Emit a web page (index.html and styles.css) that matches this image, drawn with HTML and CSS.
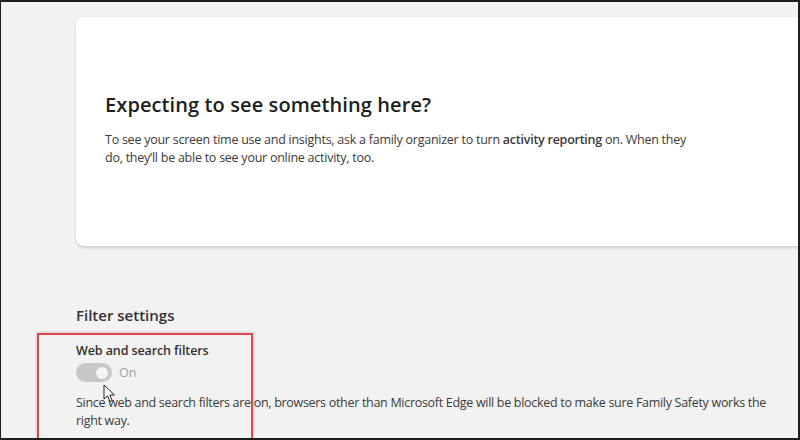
FILE: index.html
```html
<!DOCTYPE html>
<html>
<head>
    <meta http-equiv="Content-Type" content="text/html; charset=utf-8" />
    <title>Family Safety</title>
    <link rel="stylesheet" href="styles.css">
</head>
<body>
    <div class="frame">
        <div class="card">
            <h2>Expecting to see something here?</h2>
            <p>To see your screen time use and insights, ask a family organizer to turn <b>activity reporting</b> on. When they do, they’ll be able to see your online activity, too.</p>
        </div>
        <div class="filter">
            <h3>Filter settings</h3>
            <div class="filter-item">
                <label>Web and search filters</label>
                <div class="toggle-row">
                    <span class="toggle"><i></i></span>
                    <span class="toggle-text">On</span>
                </div>
                <p>Since web and search filters are on, browsers other than Microsoft Edge will be blocked to make sure Family Safety works the right way.</p>
            </div>
        </div>
        <div class="highlight"></div>
        <svg class="cursor" width="14" height="20" viewBox="0 0 14 20">
            <path d="M1 1 L1 15 L4.5 11.8 L7 17.5 L9.2 16.5 L6.8 11 L11.5 11 Z" fill="#fff" stroke="#222" stroke-width="1" stroke-linejoin="round" />
        </svg>
    </div>
</body>
</html>
```

FILE: styles.css
```css
* {
    margin: 0;
    padding: 0;
    box-sizing: border-box;
}

html, body {
    width: 100%;
    height: 100%;
}

body {
    font-family: "Open Sans", "Noto Sans", sans-serif;
    color: #323130;
    background: #fff;
}

.frame {
    position: relative;
    width: 800px;
    height: 440px;
    overflow: hidden;
    background: #f2f2f2;
    border: 1px solid #1e1e1e;
    border-width: 2px 2px 2px 1px;
}

.card {
    margin: 15px 0 0 75px;
    height: 229px;
    padding: 74px 0 0 29px;
    background: #fff;
    border-radius: 8px 0 0 8px;
    box-shadow: 0 1.5px 3px rgba(0, 0, 0, 0.14);
}

    .card h2 {
        font-size: 20px;
        font-weight: 600;
        line-height: 28px;
        color: #201f1e;
        letter-spacing: 0.1px;
    }

    .card p {
        margin-top: 12px;
        width: 590px;
        font-size: 12.5px;
        line-height: 18px;
        letter-spacing: -0.25px;
        color: #3b3a39;
    }

        .card p b {
            font-weight: 600;
        }

.filter {
    padding: 58px 0 0 75px;
}

    .filter h3 {
        font-size: 15px;
        font-weight: 600;
        line-height: 22px;
        color: #323130;
    }

.filter-item {
    padding-top: 16px;
}

    .filter-item label {
        display: block;
        font-size: 12.5px;
        font-weight: 600;
        line-height: 18px;
        letter-spacing: -0.1px;
        color: #323130;
    }

    .filter-item p {
        width: 700px;
        margin-top: 12px;
        font-size: 12.5px;
        line-height: 18px;
        letter-spacing: -0.3px;
        color: #3b3a39;
    }

.toggle-row {
    display: flex;
    align-items: center;
    gap: 7px;
    margin-top: 3px;
}

.toggle {
    display: flex;
    align-items: center;
    justify-content: flex-end;
    width: 36px;
    height: 19px;
    padding-right: 4px;
    border-radius: 10px;
    background: #c8c8c8;
}

    .toggle i {
        width: 12px;
        height: 12px;
        border-radius: 50%;
        background: #f4f4f4;
    }

.toggle-text {
    font-size: 12.5px;
    line-height: 18px;
    color: #a19f9d;
}

.highlight {
    position: absolute;
    left: 36px;
    top: 331px;
    width: 216px;
    height: 120px;
    border: 2px solid #e0464a;
    box-shadow: 0 0 3px rgba(0, 0, 0, 0.25);
}

.cursor {
    position: absolute;
    left: 102px;
    top: 382px;
}
```
